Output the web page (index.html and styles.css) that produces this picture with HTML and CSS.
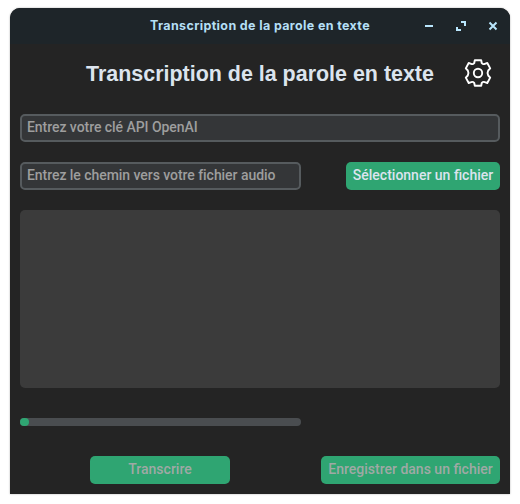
FILE: index.html
```html
<!DOCTYPE html>
<html lang="fr">
<head>
<meta charset="utf-8">
<title>Transcription de la parole en texte</title>
<link rel="stylesheet" href="styles.css">
</head>
<body>
<div class="window">
  <header class="titlebar">
    <span class="caption">Transcription de la parole en texte</span>
    <div class="controls">
      <svg width="12" height="12" viewBox="0 0 12 12"><path d="M2 6h8"/></svg>
      <svg width="12" height="12" viewBox="0 0 12 12"><path d="M6 2h4v4M2 7v3h4"/></svg>
      <svg width="12" height="12" viewBox="0 0 12 12"><path d="M2.500 2.500l7 7M9.500 2.500l-7 7"/></svg>
    </div>
  </header>
  <main class="content">
    <div class="heading">
      <h1>Transcription de la parole en texte</h1>
      <svg class="gear" width="30" height="30" viewBox="-15 -15 30 30"><path d="M-3.200-12.800H3.200L3.800-9.800Q5.200-8.300 6.800-9.200L9.300-10 12.200-4.600 10.200-2.500Q8.900 0 10.200 2.500L12.200 4.600 9.300 10 6.800 9.200Q5.200 8.300 3.800 9.800L3.200 12.800H-3.200L-3.800 9.800Q-5.200 8.300-6.800 9.200L-9.300 10-12.200 4.600-10.200 2.500Q-8.900 0-10.200-2.500L-12.200-4.600-9.300-10-6.800-9.200Q-5.200-8.300-3.800-9.800Z"/><circle r="4.200"/></svg>
    </div>
    <div class="field">Entrez votre clé API OpenAI</div>
    <div class="row file-row">
      <div class="field path">Entrez le chemin vers votre fichier audio</div>
      <div class="button select">Sélectionner un fichier</div>
    </div>
    <div class="output"></div>
    <div class="progress"><div class="bar"></div></div>
    <div class="row actions">
      <div class="button disabled transcribe">Transcrire</div>
      <div class="button disabled save">Enregistrer dans un fichier</div>
    </div>
  </main>
</div>
</body>
</html>
```

FILE: styles.css
```css
* { box-sizing: border-box; }
body { margin: 0; padding: 8px 10px 10px; background: #fff; }
.window {
  height: 486px;
  background: #242424;
  border-radius: 10px 10px 0 0;
  box-shadow: 0 0 2px rgba(0, 0, 0, .35);
  overflow: hidden;
}
.titlebar {
  display: grid;
  grid-template-columns: 1fr auto 1fr;
  align-items: center;
  height: 36px;
  background: #1e2529;
}
.caption {
  grid-column: 2;
  font: 700 12.5px/16px Inter, sans-serif;
  letter-spacing: .36px;
  color: #b4dff5;
  white-space: nowrap;
}
.controls { display: flex; justify-content: flex-end; gap: 20px; padding-right: 11px; }
.controls svg { fill: none; stroke: #b9e6fc; stroke-width: 2; }
.content { padding: 0 10px; }
.heading {
  display: grid;
  grid-template-columns: 1fr auto 1fr;
  align-items: center;
  height: 58px;
  margin-bottom: 12px;
}
.heading h1 {
  grid-column: 2;
  margin: 0;
  padding-top: 2px;
  font: 700 21.45px/28px "Liberation Sans", sans-serif;
  color: #dce4ee;
  white-space: nowrap;
}
.gear {
  justify-self: end;
  margin-right: 7px;
  fill: none;
  stroke: #fff;
  stroke-width: 1.9;
  stroke-linejoin: round;
}
.field, .button {
  height: 28px;
  border-radius: 5px;
  font: 500 14px/22px Roboto, sans-serif;
  white-space: nowrap;
}
.field {
  padding: 0 5px;
  background: #343638;
  border: 2px solid #565b5e;
  color: #9e9e9e;
  letter-spacing: -.05px;
}
.row { display: flex; justify-content: space-between; }
.file-row { margin: 20px 0; }
.path { width: 280.5px; }
.button { background: #2fa572; color: #dce4ee; text-align: center; line-height: 26px; }
.select { width: 154px; }
.output { height: 178px; background: #3b3b3b; border-radius: 5px; }
.progress {
  width: 280.5px;
  height: 8px;
  margin: 30px 0;
  background: #4a4d50;
  border-radius: 4px;
}
.bar { width: 8.5px; height: 8px; background: #2fa572; border-radius: 4px; }
.actions { padding-left: 70px; }
.disabled { color: #9fa9a5; }
.transcribe { width: 140px; }
.save { width: 179px; }
```
